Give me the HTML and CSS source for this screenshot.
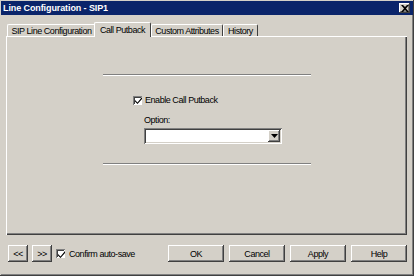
FILE: index.html
```html
<!DOCTYPE html>
<html lang="en">
<head>
    <meta charset="UTF-8">
    <title>Line Configuration - SIP1</title>
    <link rel="stylesheet" href="styles.css">
</head>
<body>
<div class="window">
    <div class="titlebar">
        <span class="title">Line Configuration - SIP1</span>
        <span class="close">
            <svg width="8" height="7" viewBox="0 0 8 7">
                <path d="M0 0h2l2 2 2-2h2L5 3.5 8 7H6L4 5 2 7H0l3-3.5z" fill="#000"/>
            </svg>
        </span>
    </div>

    <div class="client">
        <div class="tabs">
            <div class="tab tab-sip">SIP Line Configuration</div>
            <div class="tab tab-putback active">Call Putback</div>
            <div class="tab tab-custom">Custom Attributes</div>
            <div class="tab tab-history">History</div>
        </div>

        <div class="panel">
            <div class="group">
                <div class="sep"></div>
                <label class="check check-enable">
                    <span class="box">
                        <svg width="7" height="7" viewBox="0 0 7 7">
                            <path d="M0 3l2.5 2.5L7 0v2L2.5 7 0 4.5z" fill="#000"/>
                        </svg>
                    </span>
                    Enable Call Putback
                </label>
                <div class="field-label">Option:</div>
                <div class="combo">
                    <span class="combo-btn">
                        <svg width="7" height="4" viewBox="0 0 7 4"><path d="M0 0h7L3.5 4z" fill="#000"/></svg>
                    </span>
                </div>
                <div class="sep sep-bottom"></div>
            </div>
        </div>

        <div class="footer">
            <button class="btn btn-nav">&lt;&lt;</button>
            <button class="btn btn-nav">&gt;&gt;</button>
            <label class="check check-autosave">
                <span class="box">
                    <svg width="7" height="7" viewBox="0 0 7 7">
                        <path d="M0 3l2.5 2.5L7 0v2L2.5 7 0 4.5z" fill="#000"/>
                    </svg>
                </span>
                Confirm auto-save
            </label>
            <div class="actions">
                <button class="btn">OK</button>
                <button class="btn">Cancel</button>
                <button class="btn">Apply</button>
                <button class="btn">Help</button>
            </div>
        </div>
    </div>
</div>
</body>
</html>
```

FILE: styles.css
```css
:root {
    --face: #d4d0c8;
    --light: #ffffff;
    --shadow: #808080;
    --dark: #404040;
    --title: #0a246a;
    --font-ui: 'Liberation Sans', Arial, sans-serif;
}

* {
    box-sizing: border-box;
    margin: 0;
    padding: 0;
}

body {
    width: 414px;
    height: 276px;
    overflow: hidden;
    background: var(--face);
    font-family: var(--font-ui);
    font-size: 9px;
    letter-spacing: -0.45px;
    color: #000;
}

.window {
    width: 414px;
    height: 276px;
    padding: 1px;
    display: flex;
    flex-direction: column;
    background: var(--face);
    box-shadow: inset -1px -1px var(--dark), inset 1px 1px var(--face), inset -2px -2px var(--shadow);
}

/* title bar */
.titlebar {
    height: 14px;
    display: flex;
    align-items: center;
    justify-content: space-between;
    padding: 0 3px 0 2px;
    background: var(--title);
}

.title {
    color: #fff;
    font-weight: bold;
    font-size: 9px;
    letter-spacing: -0.1px;
}

.close {
    width: 11px;
    height: 10px;
    display: flex;
    align-items: center;
    justify-content: center;
    background: var(--face);
    box-shadow: inset -1px -1px var(--dark), inset 1px 1px var(--light), inset -2px -2px var(--shadow);
}

.client {
    flex: 1;
    display: flex;
    flex-direction: column;
    padding: 7px 6px 0 5px;
}

/* tabs */
.tabs {
    display: flex;
    height: 14px;
    align-items: flex-end;
    padding-left: 1px;
    position: relative;
    z-index: 1;
}

.tab {
    height: 12px;
    display: flex;
    align-items: center;
    justify-content: center;
    white-space: nowrap;
    border-top: 1px solid var(--light);
    border-left: 1px solid var(--light);
    border-right: 1px solid var(--dark);
    border-radius: 2px 2px 0 0;
    background: var(--face);
}

.tab-sip { width: 89px; }
.tab-putback { width: 54px; }
.tab-custom { width: 72px; margin-left: 1px; }
.tab-history { width: 35px; }

.tab.active {
    height: 15px;
    margin: 0 -1px -1px -2px;
    padding-bottom: 1px;
    width: 57px;
}

/* panel */
.panel {
    height: 199px;
    border-top: 1px solid var(--light);
    border-left: 1px solid var(--light);
    box-shadow: inset -1px -1px var(--dark), inset -2px -2px var(--shadow);
    padding-top: 37px;
}

.group {
    width: 208px;
    margin: 0 auto;
}

.sep {
    height: 2px;
    border-top: 1px solid var(--shadow);
    border-bottom: 1px solid var(--light);
}

.sep-bottom {
    margin-top: 19px;
}

.check {
    display: flex;
    align-items: center;
    gap: 3px;
    height: 10px;
}

.check-enable {
    margin-top: 19px;
    padding-left: 30px;
}

.box {
    width: 9px;
    height: 9px;
    display: flex;
    align-items: center;
    justify-content: center;
    background: #fff;
    box-shadow: inset 1px 1px var(--shadow), inset -1px -1px var(--light), inset 2px 2px var(--dark);
}

.box svg {
    margin: 1px 0 0 1px;
}

.field-label {
    margin-top: 10px;
    padding-left: 41px;
    line-height: 10px;
}

.combo {
    margin: 3px 0 0 41px;
    width: 138px;
    height: 16px;
    background: #fff;
    display: flex;
    justify-content: flex-end;
    padding: 2px;
    box-shadow: inset 1px 1px var(--shadow), inset -1px -1px var(--light), inset 2px 2px var(--dark), inset -2px -2px var(--face);
}

.combo-btn {
    width: 12px;
    height: 12px;
    display: flex;
    align-items: center;
    justify-content: center;
    background: var(--face);
    box-shadow: inset -1px -1px var(--dark), inset 1px 1px var(--light), inset -2px -2px var(--shadow);
}

/* footer */
.footer {
    display: flex;
    align-items: center;
    margin-top: 10px;
    padding-left: 2px;
}

.btn {
    width: 56px;
    height: 17px;
    border: none;
    background: var(--face);
    font-family: var(--font-ui);
    font-size: 9px;
    letter-spacing: -0.45px;
    color: #000;
    box-shadow: inset -1px -1px var(--dark), inset 1px 1px var(--light), inset -2px -2px var(--shadow);
}

.btn-nav {
    width: 20px;
    margin-right: 4px;
}

.check-autosave {
    gap: 4px;
}

.actions {
    margin-left: auto;
    display: flex;
    gap: 5px;
}
```
